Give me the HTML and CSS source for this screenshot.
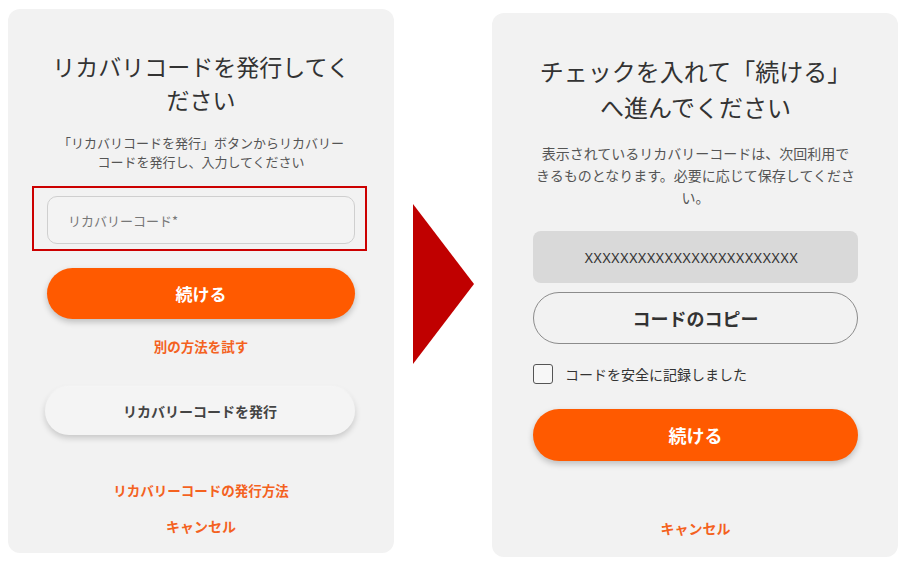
FILE: index.html
```html
<!DOCTYPE html>
<html lang="ja">
<head>
<meta charset="utf-8">
<title>リカバリーコード</title>
<link rel="stylesheet" href="styles.css">
</head>
<body>
<div class="page">
  <section class="card card-left">
    <h1 class="title title-left">リカバリコードを発行してく<br>ださい</h1>
    <p class="lead lead-left">「リカバリコードを発行」ボタンからリカバリー<br>コードを発行し、入力してください</p>
    <div class="highlight">
      <div class="input">リカバリーコード*</div>
    </div>
    <button class="btn btn-primary btn-left">続ける</button>
    <a class="link link-alt">別の方法を試す</a>
    <button class="btn btn-soft">リカバリーコードを発行</button>
    <a class="link link-howto">リカバリーコードの発行方法</a>
    <a class="link link-cancel-left">キャンセル</a>
  </section>

  <div class="arrow">
    <svg width="61" height="160" viewBox="0 0 61 160"><polygon points="0,0 61,80 0,160" fill="#c00000"/></svg>
  </div>

  <section class="card card-right">
    <h1 class="title title-right">チェックを入れて「続ける」<br>へ進んでください</h1>
    <p class="lead lead-right">表示されているリカバリーコードは、次回利用で<br>きるものとなります。必要に応じて保存してくださ<br>い。</p>
    <div class="code">XXXXXXXXXXXXXXXXXXXXXXXX</div>
    <button class="btn btn-outline">コードのコピー</button>
    <label class="check">
      <span class="box"></span>
      <span class="check-label">コードを安全に記録しました</span>
    </label>
    <button class="btn btn-primary btn-right">続ける</button>
    <a class="link link-cancel-right">キャンセル</a>
  </section>
</div>
</body>
</html>
```
FILE: styles.css
```css
* { box-sizing: border-box; }

html, body {
  margin: 0;
  padding: 0;
  background: #ffffff;
}

body {
  font-family: "Noto Sans CJK JP", "Noto Sans", sans-serif;
  color: #333333;
  width: 917px;
  height: 567px;
  overflow: hidden;
}

.page {
  display: flex;
  align-items: flex-start;
  padding-left: 8px;
}

.card {
  background: #f2f2f2;
  border-radius: 12px;
  display: flex;
  flex-direction: column;
  align-items: stretch;
  height: 544px;
}

.card-left {
  width: 386px;
  margin-top: 9px;
  padding: 41px 39px 0 39px;
}

.card-right {
  width: 406px;
  margin-top: 13px;
  margin-left: 18px;
  padding: 40px 40px 0 41px;
}

.arrow {
  margin-top: 204px;
  margin-left: 19px;
  width: 61px;
  height: 160px;
  display: flex;
}

.title {
  margin: 0;
  font-weight: 400;
  font-size: 23px;
  text-align: center;
  color: #333333;
  white-space: nowrap;
}

.title-left { line-height: 33px; }
.title-right { line-height: 36px; font-size: 24px; }

.lead {
  margin: 0;
  text-align: center;
  color: #555555;
  white-space: nowrap;
}

.lead-left {
  font-size: 13px;
  line-height: 19px;
  margin-top: 17px;
}

.lead-right {
  font-size: 14px;
  line-height: 22px;
  margin-top: 17px;
}

.highlight {
  margin: 15px -12px 0 -15px;
  border: 2px solid #cc0000;
  padding: 8px 10px 5px 13px;
}

.input {
  height: 48px;
  border: 1px solid #cfcfcf;
  border-radius: 10px;
  background: #f3f3f3;
  display: flex;
  align-items: center;
  padding-left: 20px;
  font-size: 13px;
  color: #777777;
}

.btn {
  font-family: "Noto Sans CJK JP", "Noto Sans", sans-serif;
  border: none;
  border-radius: 999px;
  font-weight: 700;
  display: flex;
  align-items: center;
  justify-content: center;
  padding: 0;
  cursor: pointer;
}

.btn-primary {
  background: #ff5a00;
  color: #ffffff;
  font-size: 17px;
  box-shadow: 0 3px 6px rgba(0, 0, 0, 0.22);
}

.btn-left {
  margin-top: 17px;
  height: 51px;
}

.btn-right {
  margin-top: 25px;
  height: 52px;
  font-size: 18px;
}

.btn-soft {
  margin: 31px 0 0 -2px;
  height: 48px;
  background: #f4f4f4;
  color: #444444;
  font-size: 14px;
  box-shadow: 0 3px 6px rgba(0, 0, 0, 0.18), 0 -1px 2px rgba(255, 255, 255, 0.9);
}

.link {
  display: block;
  text-align: center;
  color: #f4621f;
  font-weight: 700;
  font-size: 13.5px;
  line-height: 20px;
  text-decoration: none;
}

.link-alt { margin-top: 17px; }
.link-howto { margin-top: 45px; }
.link-cancel-left { margin-top: 16px; font-size: 14px; }
.link-cancel-right { margin-top: 57px; font-size: 14px; }

.code {
  margin-top: 23px;
  height: 52px;
  background: #d9d9d9;
  border-radius: 8px;
  display: flex;
  align-items: center;
  justify-content: center;
  padding-right: 8px;
  font-family: "Noto Sans", sans-serif;
  font-size: 14px;
  letter-spacing: 0.7px;
  color: #333333;
}

.btn-outline {
  margin-top: 9px;
  height: 52px;
  background: transparent;
  border: 1px solid #8c8c8c;
  color: #333333;
  font-size: 18px;
}

.check {
  margin-top: 20px;
  display: flex;
  align-items: center;
  height: 20px;
}

.box {
  width: 20px;
  height: 20px;
  border: 1.5px solid #555555;
  border-radius: 3px;
  background: #f7f7f7;
  flex: none;
}

.check-label {
  margin-left: 12px;
  font-size: 14px;
  color: #333333;
}
```
